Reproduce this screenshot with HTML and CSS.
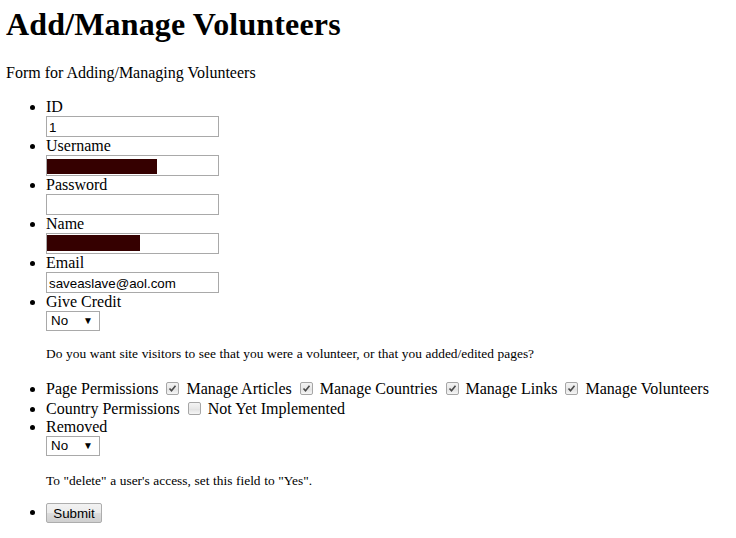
FILE: index.html
```html
<!DOCTYPE html>
<html>
<head>
<meta charset="utf-8">
<title>Add/Manage Volunteers</title>
<link rel="stylesheet" href="styles.css">
</head>
<body>
<h1 class="title">Add/Manage Volunteers</h1>
<p class="intro">Form for Adding/Managing Volunteers</p>
<ul class="form-list">
  <li><span class="label">ID</span><input class="field" type="text" value="1"></li>
  <li><span class="label">Username</span><span class="field-wrap"><input class="field" type="text" value=""><span class="redact redact-user"></span></span></li>
  <li><span class="label">Password</span><input class="field" type="password" value=""></li>
  <li><span class="label">Name</span><span class="field-wrap"><input class="field" type="text" value=""><span class="redact redact-name"></span></span></li>
  <li><span class="label">Email</span><input class="field" type="text" value="saveaslave@aol.com"></li>
  <li><span class="label">Give Credit</span><span class="select"><span class="select-val">No</span><span class="select-arrow">&#9660;</span></span>
    <p class="note note-first">Do you want site visitors to see that you were a volunteer, or that you added/edited pages?</p></li>
  <li class="inline-row">Page Permissions <span class="cb checked"><svg viewBox="0 0 13 13" width="13" height="13"><path d="M3.5 6.5 L5.5 8.7 L9.5 3.8" fill="none" stroke="#4a4a4a" stroke-width="1.6"/></svg></span> Manage Articles <span class="cb checked"><svg viewBox="0 0 13 13" width="13" height="13"><path d="M3.5 6.5 L5.5 8.7 L9.5 3.8" fill="none" stroke="#4a4a4a" stroke-width="1.6"/></svg></span> Manage Countries <span class="cb checked"><svg viewBox="0 0 13 13" width="13" height="13"><path d="M3.5 6.5 L5.5 8.7 L9.5 3.8" fill="none" stroke="#4a4a4a" stroke-width="1.6"/></svg></span> Manage Links <span class="cb checked"><svg viewBox="0 0 13 13" width="13" height="13"><path d="M3.5 6.5 L5.5 8.7 L9.5 3.8" fill="none" stroke="#4a4a4a" stroke-width="1.6"/></svg></span> Manage Volunteers</li>
  <li class="inline-row row-short">Country Permissions <span class="cb"></span> Not Yet Implemented</li>
  <li><span class="label">Removed</span><span class="select"><span class="select-val">No</span><span class="select-arrow">&#9660;</span></span>
    <p class="note note-second">To "delete" a user's access, set this field to "Yes".</p></li>
  <li class="submit-row"><button class="btn" type="button">Submit</button></li>
</ul>
</body>
</html>
```
FILE: styles.css
```css
html, body {
  background: #ffffff;
}
body {
  margin: 0 6px;
  font-family: "Liberation Serif", "Times New Roman", serif;
  font-size: 16px;
  color: #000;
}
.title {
  font-size: 32px;
  font-weight: bold;
  margin: 6px 0 21px;
  line-height: 37px;
  letter-spacing: 0.15px;
}
.intro {
  margin: 0 0 16px;
  line-height: 18px;
}
.form-list {
  margin: 0;
  padding-left: 40px;
  list-style: disc;
}
.form-list li {
  line-height: 18px;
}
.label {
  display: block;
  height: 18px;
}
.field-wrap {
  display: block;
  position: relative;
  width: 173px;
}
.field {
  display: block;
  box-sizing: border-box;
  width: 173px;
  height: 21px;
  margin: 0;
  padding: 2px 2px 0;
  border: 1px solid #a9a9a9;
  font-family: "Liberation Sans", Arial, sans-serif;
  font-size: 13.33px;
  color: #000;
  background: #fff;
  outline: none;
}
.redact {
  position: absolute;
  left: 1px;
  background: #350000;
}
.redact-user {
  top: 4px;
  width: 110px;
  height: 15px;
}
.redact-name {
  top: 2px;
  width: 93px;
  height: 16px;
}
.select {
  display: flex;
  align-items: center;
  justify-content: space-between;
  box-sizing: border-box;
  width: 54px;
  height: 20px;
  border: 1px solid #a9a9a9;
  padding: 0 6px 0 4px;
  font-family: "Liberation Sans", Arial, sans-serif;
  font-size: 13.33px;
  background: #fff;
}
.select-arrow {
  font-size: 10px;
  line-height: 1;
}
.note {
  font-size: 13.4px;
  line-height: 15px;
  word-spacing: 0.3px;
  margin: 15px 0 19px;
}
.note-second {
  margin: 17px 0 15px;
}
.inline-row {
  height: 20px;
  line-height: 20px;
}
.row-short {
  height: 18px;
  line-height: 18px;
}
.cb {
  display: inline-block;
  box-sizing: border-box;
  width: 13px;
  height: 13px;
  margin: 0 3px 0 4px;
  vertical-align: -1px;
  border: 1px solid #a6a6a6;
  border-radius: 2px;
  background: linear-gradient(#f4f4f4, #e8e8e8 50%, #e0e0e0 51%, #f6f6f6);
  overflow: hidden;
}
.cb svg {
  display: block;
  margin: -1px;
}
.submit-row {
  height: 20px;
}
.btn {
  box-sizing: border-box;
  width: 56px;
  height: 20px;
  margin: 0;
  padding: 0;
  border: 1px solid #adadad;
  border-radius: 2px;
  background: linear-gradient(#f2f2f2, #ebebeb 50%, #dddddd 51%, #cfcfcf);
  font-family: "Liberation Sans", Arial, sans-serif;
  font-size: 13.33px;
  color: #000;
  vertical-align: top;
}
```
